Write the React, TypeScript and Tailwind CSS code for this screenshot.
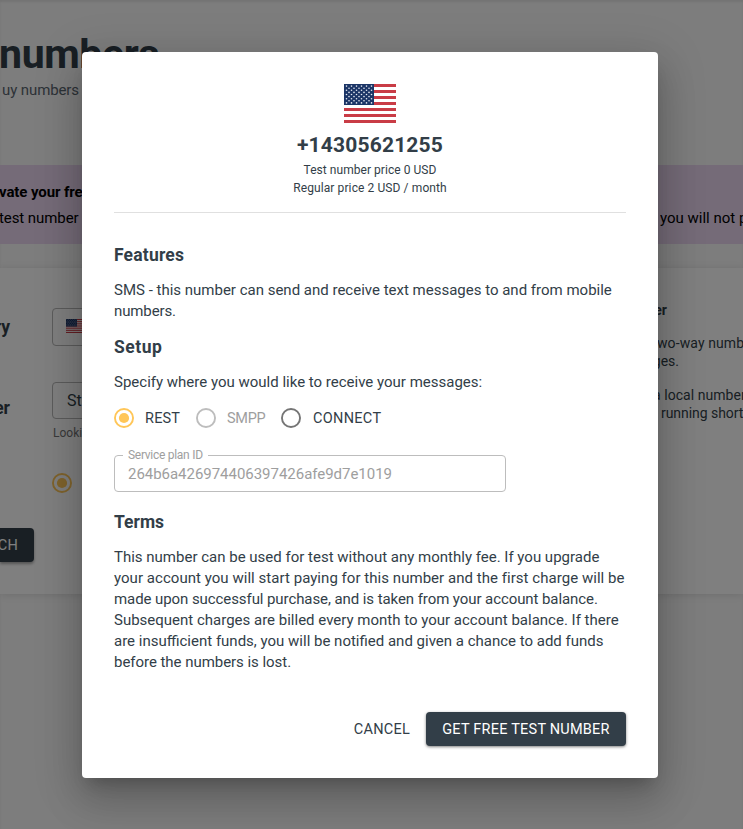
import type { ReactNode } from "react";

function Flag({ className }: { className: string }) {
  const stripes = [0, 2, 4, 6, 8, 10, 12];
  const rows = [0, 1, 2, 3, 4, 5, 6, 7, 8];
  return (
    <svg viewBox="0 0 52 39" className={className} preserveAspectRatio="none">
      <rect width="52" height="39" fill="#fff" />
      {stripes.map((s) => (
        <rect key={s} y={s * 3} width="52" height="3" fill="#c93c46" />
      ))}
      <rect width="30" height="21" fill="#1b3566" />
      {rows.map((r) =>
        Array.from({ length: r % 2 ? 5 : 6 }, (_, c) => (
          <circle key={`${r}-${c}`} cx={2.5 + c * 5 + (r % 2 ? 2.5 : 0)} cy={2.1 + r * 2.1} r="0.8" fill="#e6eaf2" />
        )),
      )}
    </svg>
  );
}

function Radio({ color, checked }: { color: string; checked?: boolean }) {
  return (
    <svg viewBox="0 0 20 20" className="size-5 shrink-0" fill="none">
      <circle cx="10" cy="10" r="9.05" stroke={color} strokeWidth="1.9" />
      {checked && <circle cx="10" cy="10" r="5.1" fill={color} />}
    </svg>
  );
}

function Line({ children, className = "" }: { children: ReactNode; className?: string }) {
  return <div className={`whitespace-nowrap ${className}`}>{children}</div>;
}

function Page() {
  return (
    <div className="flex h-full flex-col bg-[#fafafa] shadow-[inset_0_2px_2px_rgba(0,0,0,0.08)]">
      <div className="flex h-[165px] flex-col pt-[30px]">
        <div className="flex h-[48px] w-[159px] justify-end text-[41px] leading-[48px] font-bold tracking-[-0.4px] whitespace-nowrap">
          numbers
        </div>
        <div className="mt-[2px] flex w-[79px] justify-end text-[15px] leading-[21px] tracking-[-0.1px] whitespace-nowrap text-[#5a6670]">
          uy numbers
        </div>
      </div>

      <div className="flex h-[79px] shrink-0 justify-between bg-[#ead6f1] pt-[17px] text-[15px] text-black">
        <div className="flex flex-col items-start">
          <Line className="-ml-px leading-[21px] font-bold tracking-[-0.1px]">vate your free</Line>
          <Line className="mt-[5px] -ml-px leading-[21px] tracking-[-0.08px]">test number</Line>
        </div>
        <div className="w-[83px] overflow-hidden pt-[26px]">
          <Line className="leading-[21px]">you will not p</Line>
        </div>
      </div>

      <div className="mt-[24px] flex h-[326px] shrink-0 bg-white shadow-[0_1px_8px_rgba(0,0,0,0.12)]">
        <div className="flex w-[34px] flex-col">
          <Line className="mt-[47px] -ml-[7px] w-[17px] text-right text-[17.5px] leading-[24px] font-bold">ry</Line>
          <Line className="mt-[57px] -ml-[7px] w-[17px] text-right text-[17.5px] leading-[24px] font-bold">er</Line>
          <div className="mt-[108px] flex h-[34px] items-center justify-end rounded-r bg-[#323e48] pt-px pr-4 text-[14.5px] tracking-[0.2px] text-white shadow-[0_2px_3px_rgba(0,0,0,0.35)]">
            CH
          </div>
        </div>
        <div className="ml-[18px] w-[200px] pt-[40px]">
          <div className="flex h-[38px] items-start rounded border border-[#b8b8b8] pt-[10px] pl-[13px]">
            <Flag className="h-[14px] w-[19px]" />
          </div>
          <div className="mt-9 flex h-[37px] items-center rounded border border-[#b8b8b8] pl-[14px] text-[16px]">
            St
          </div>
          <div className="mt-[6px] pl-px text-[12px] leading-[16px] text-[#757575]">Looki</div>
          <div className="mt-8">
            <Radio color="#ffc658" checked />
          </div>
        </div>
        <div className="ml-auto w-[90px] overflow-hidden pt-[32px] text-[14px] leading-[18px]">
          <div className="flex w-[14px] justify-end leading-[20px] font-bold">er</div>
          <Line className="mt-[14px] pl-[4px] leading-[18px] tracking-[0.1px]">wo-way numb</Line>
          <div className="flex w-[26px] justify-end leading-[18px]">ges.</div>
          <Line className="mt-4 tracking-[0.05px]">a local number</Line>
          <Line className="pl-[8px] tracking-[-0.05px]">running short</Line>
        </div>
      </div>
    </div>
  );
}

function Heading({ children, className }: { children: ReactNode; className: string }) {
  return <h3 className={`text-[17.5px] leading-[24px] font-bold ${className}`}>{children}</h3>;
}

function Dialog() {
  return (
    <div className="flex h-[726px] w-[576px] flex-col rounded bg-white p-8 shadow-[0_11px_15px_-7px_rgba(0,0,0,0.2),0_24px_38px_3px_rgba(0,0,0,0.14),0_9px_46px_8px_rgba(0,0,0,0.12)]">
      <div className="flex h-[129px] shrink-0 flex-col items-center border-b border-[#e0e0e0]">
        <Flag className="h-[39px] w-[52px]" />
        <div className="mt-[10px] text-[21px] leading-[24px] font-bold tracking-[0.18px]">+14305621255</div>
        <div className="mt-1 text-[12px] leading-[18px] tracking-[0.05px]">Test number price 0 USD</div>
        <div className="text-[12px] leading-[18px] tracking-[0.1px]">Regular price 2 USD / month</div>
      </div>

      <Heading className="mt-[30px] tracking-[0.19px]">Features</Heading>
      <div className="mt-[13px] text-[15px] leading-[21px]">
        <Line>SMS - this number can send and receive text messages to and from mobile</Line>
        <Line className="tracking-[-0.12px]">numbers.</Line>
      </div>

      <Heading className="mt-[13px] tracking-[0.5px]">Setup</Heading>
      <Line className="mt-[13px] text-[15px] leading-[21px]">Specify where you would like to receive your messages:</Line>
      <div className="mt-[15px] flex h-5 items-center text-[14.5px] whitespace-nowrap">
        <Radio color="#ffc658" checked />
        <div className="ml-[11px] w-[51px] pt-[2px] tracking-[0.19px]">REST</div>
        <Radio color="#bdbdbd" />
        <div className="ml-[11px] w-[54px] pt-[2px] tracking-[-0.3px] text-[#9e9e9e]">SMPP</div>
        <Radio color="#757575" />
        <div className="ml-[12px] pt-[2px] tracking-[0.3px]">CONNECT</div>
      </div>

      <div className="relative mt-[27px] flex h-[37px] w-[392px] items-center rounded border border-[#bdbdbd] pt-[2px] pl-[13px] text-[15px] text-[#9e9e9e]">
        <span className="absolute -top-2 left-2 bg-white px-[5px] text-[12px] leading-[14px] tracking-[-0.28px]">Service plan ID</span>
        <span className="tracking-[-0.03px]">264b6a426974406397426afe9d7e1019</span>
      </div>

      <Heading className="mt-[18px]">Terms</Heading>
      <div className="mt-[13px] text-[15px] leading-[21px]">
        <Line>This number can be used for test without any monthly fee. If you upgrade</Line>
        <Line className="tracking-[0.04px]">your account you will start paying for this number and the first charge will be</Line>
        <Line className="tracking-[-0.08px]">made upon successful purchase, and is taken from your account balance.</Line>
        <Line>Subsequent charges are billed every month to your account balance. If there</Line>
        <Line>are insufficient funds, you will be notified and given a chance to add funds</Line>
        <Line className="tracking-[-0.04px]">before the numbers is lost.</Line>
      </div>

      <div className="mt-[39px] flex justify-end text-[14.5px] whitespace-nowrap">
        <button className="h-[34px] px-4 pt-[2px] tracking-[0.25px]">CANCEL</button>
        <button className="h-[34px] w-[200px] rounded bg-[#323e48] pt-[2px] tracking-[0.22px] text-white shadow-[0_1px_3px_rgba(0,0,0,0.5)]">
          GET FREE TEST NUMBER
        </button>
      </div>
    </div>
  );
}

export default function App() {
  return (
    <div className="relative h-[829px] w-[743px] overflow-hidden font-['Roboto','Liberation_Sans',sans-serif] text-[#323e48]">
      <Page />
      <div className="absolute inset-0 bg-black/50 pt-[52px] pl-[82px]">
        <Dialog />
      </div>
    </div>
  );
}
